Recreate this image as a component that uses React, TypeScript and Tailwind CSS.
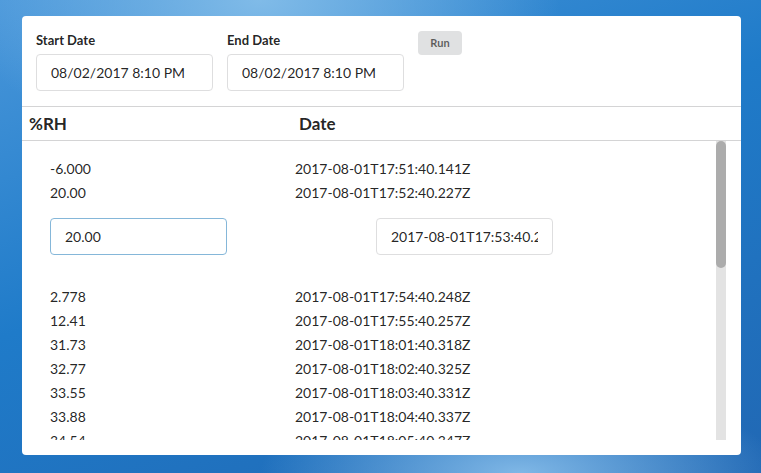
import type { ReactNode } from 'react';

const before = [
  { rh: '-6.000', date: '2017-08-01T17:51:40.141Z' },
  { rh: '20.00', date: '2017-08-01T17:52:40.227Z' },
];

const after = [
  { rh: '2.778', date: '2017-08-01T17:54:40.248Z' },
  { rh: '12.41', date: '2017-08-01T17:55:40.257Z' },
  { rh: '31.73', date: '2017-08-01T18:01:40.318Z' },
  { rh: '32.77', date: '2017-08-01T18:02:40.325Z' },
  { rh: '33.55', date: '2017-08-01T18:03:40.331Z' },
  { rh: '33.88', date: '2017-08-01T18:04:40.337Z' },
  { rh: '34.54', date: '2017-08-01T18:05:40.347Z' },
];

function Field({ label, value }: { label: string; value: string }) {
  return (
    <div className="w-[177px] pt-[1px]">
      <label className="block text-[13px] font-bold leading-[16px] text-[rgba(0,0,0,0.87)]">{label}</label>
      <input
        readOnly
        value={value}
        className="mt-[6px] h-[37px] w-full rounded border border-[#dededf] px-[14px] text-[14px] text-[rgba(0,0,0,0.87)] outline-none"
      />
    </div>
  );
}

function Row({ rh, date }: { rh: string; date: string }) {
  return (
    <div className="flex h-[24px] shrink-0 items-center text-[14px] text-[rgba(0,0,0,0.87)]">
      <span className="w-[273px] pl-[28px]">{rh}</span>
      <span>{date}</span>
    </div>
  );
}

function Card({ children }: { children: ReactNode }) {
  return <div className="flex h-[439px] w-[719px] flex-col rounded bg-white">{children}</div>;
}

export default function App() {
  return (
    <div
      className="h-[473px] w-[761px] overflow-hidden pl-[22px] pt-4 bg-[radial-gradient(ellipse_300px_160px_at_260px_0px,#80bbe8_0%,rgba(128,187,232,0)_100%),radial-gradient(ellipse_260px_90px_at_520px_473px,#7fb7e6_0%,rgba(127,183,230,0)_100%),linear-gradient(160deg,#4a97da_0%,#1f7bc9_45%,#2168b4_100%)]"
      style={{ fontFamily: 'Lato, "Open Sans", sans-serif' }}
    >
      <Card>
        <div className="flex h-[91px] shrink-0 gap-[14px] border-b border-[#d4d4d5] pl-[14px] pt-[15px]">
          <Field label="Start Date" value="08/02/2017 8:10 PM" />
          <Field label="End Date" value="08/02/2017 8:10 PM" />
          <button className="h-[24px] w-[44px] rounded bg-[#e0e1e2] text-[11px] font-bold text-[rgba(0,0,0,0.6)]">
            Run
          </button>
        </div>
        <div className="flex h-[34px] shrink-0 items-center border-b border-[#d4d4d5] pl-[7px] text-[17px] font-bold text-[rgba(0,0,0,0.87)]">
          <span className="w-[270px]">%RH</span>
          <span>Date</span>
        </div>
        <div className="mr-[15px] flex h-[299px] shrink-0">
          <div className="flex flex-1 flex-col overflow-hidden pt-[15px]">
            {before.map((r) => (
              <Row key={r.date} {...r} />
            ))}
            <div className="mb-[29px] mt-[14px] flex shrink-0">
              <input
                readOnly
                value="20.00"
                className="ml-[28px] h-[37px] w-[177px] rounded border border-[#85b7d9] px-[14px] text-[14px] text-[rgba(0,0,0,0.87)] outline-none"
              />
              <input
                readOnly
                value="2017-08-01T17:53:40.234Z"
                className="ml-[149px] h-[37px] w-[177px] rounded border border-[#dededf] px-[14px] text-[14px] text-[rgba(0,0,0,0.87)] outline-none"
              />
            </div>
            {after.map((r) => (
              <Row key={r.date} {...r} />
            ))}
          </div>
          <div className="w-[10px] bg-[#e3e3e3]">
            <div className="h-[127px] rounded-[5px] bg-[#acacac]" />
          </div>
        </div>
      </Card>
    </div>
  );
}
